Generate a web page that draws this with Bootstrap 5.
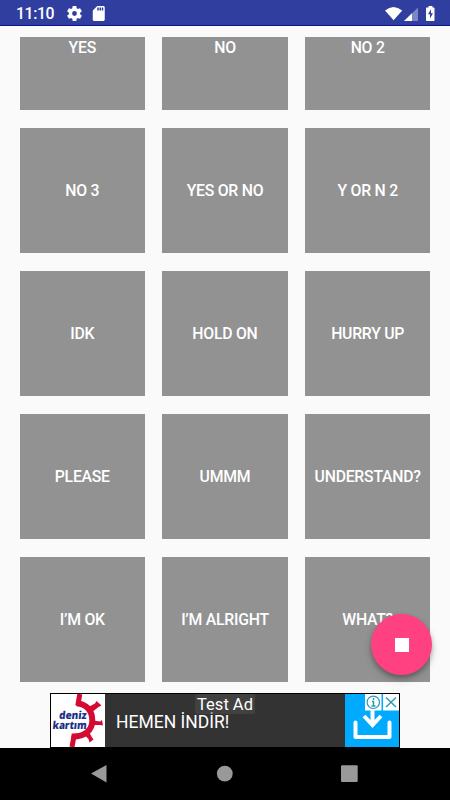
<!DOCTYPE html>
<html lang="en">
<head>
<meta charset="utf-8">
<meta name="viewport" content="width=device-width, initial-scale=1">
<title>Soundboard</title>
<link href="https://cdn.jsdelivr.net/npm/bootstrap@5.3.0/dist/css/bootstrap.min.css" rel="stylesheet">
<style>
body{font-family:Roboto,"Liberation Sans",sans-serif;background:#fafafa;line-height:1}
.screen{width:450px;height:800px}
.status-bar{height:26px;background:#303e9f;border-bottom:1px solid #0a1690;padding:2px 15px 0 16px}
.clock{font-size:15.8px;font-weight:500;letter-spacing:-.4px;width:51px;white-space:nowrap;line-height:23px}
.board{height:645px;margin:11px 19.7px 0}
.tiles{display:grid;grid-template-columns:repeat(3,125.2px);grid-auto-rows:125.4px;gap:17.6px 17.5px}
.tile{background:#929292;color:#fff;font-size:15.8px;font-weight:500;letter-spacing:-.25px;border:0;border-radius:0;padding:2px 0 0;white-space:nowrap;line-height:20px}
.ad{width:350px;height:55px;margin:11px 0 0 50px;background:#333;border:1px solid #000}
.ad-logo{width:54px;background:#fff}
.ad-title{font-size:17.5px;padding:2px 0 0 11px;line-height:20px}
.ad-action{width:54px;background:#00aaff}
.ad-label{left:144px;top:0;width:60px;height:20px;background:rgba(80,80,80,.5);font-size:16.5px;line-height:22px;border-radius:2px}
.fab{left:371px;top:614px;width:61px;height:61px;background:#ff4081;box-shadow:0 3px 5px rgba(0,0,0,.28),0 5px 10px rgba(0,0,0,.12);border:0}
.fab-stop{width:14px;height:14px;background:#fff}
.nav-keys{height:52px;background:#000}
svg{display:block}
</style>
</head>
<body>
<div class="screen position-relative d-flex flex-column overflow-hidden">
  <header class="status-bar d-flex align-items-center text-white flex-shrink-0">
    <span class="clock">11:10</span>
    <svg width="15" height="15" viewBox="2 2 20 20" fill="#fff"><path d="M19.43 12.98c.04-.32.07-.64.07-.98s-.03-.66-.07-.98l2.11-1.65c.19-.15.24-.42.12-.64l-2-3.46c-.12-.22-.39-.3-.61-.22l-2.49 1c-.52-.4-1.08-.73-1.69-.98l-.38-2.65C14.46 2.18 14.25 2 14 2h-4c-.25 0-.46.18-.49.42l-.38 2.65c-.61.25-1.17.59-1.69.98l-2.49-1c-.23-.09-.49 0-.61.22l-2 3.46c-.13.22-.07.49.12.64l2.11 1.65c-.04.32-.07.65-.07.98s.03.66.07.98l-2.11 1.65c-.19.15-.24.42-.12.64l2 3.46c.12.22.39.3.61.22l2.49-1c.52.4 1.08.73 1.69.98l.38 2.65c.03.24.24.42.49.42h4c.25 0 .46-.18.49-.42l.38-2.65c.61-.25 1.17-.59 1.69-.98l2.49 1c.23.09.49 0 .61-.22l2-3.46c.12-.22.07-.49-.12-.64l-2.11-1.65zM12 15.2a3.2 3.2 0 1 1 0-6.4 3.2 3.2 0 0 1 0 6.4z"/></svg>
    <svg class="ms-2" width="16" height="15" viewBox="1 2 20 20" fill="#fff"><path d="M18 2h-8L4 8v12c0 1.100.9 2 2 2h12c1.100 0 2-.9 2-2V4c0-1.100-.9-2-2-2zm-6 6h-2V4h2v4zm3 0h-2V4h2v4zm3 0h-2V4h2v4z"/></svg>
    <span class="ms-auto">
      <svg width="50" height="16" viewBox="0 0 50 16">
        <path d="M0 4.500Q8.500-2.500 17.200 4.500L8.600 14.300z" fill="#fff"/>
        <path d="M19 15L33 1.500V15z" fill="#7c86c4"/>
        <path d="M19 15L27 7.200V15z" fill="#fff"/>
        <path d="M41.500 1.500h2V0h4v1.500H49l.5.500V14.500l-.5.500H41.500L41 14.500V2z" fill="#fff"/>
        <path d="M46 3.200l-3 5.100h2v4.200l3-5.300h-2z" fill="#303e9f"/>
      </svg>
    </span>
  </header>

  <main class="board d-flex flex-column justify-content-end overflow-hidden flex-shrink-0">
    <div class="tiles">
      <button class="tile">YES</button><button class="tile">NO</button><button class="tile">NO 2</button>
      <button class="tile">NO 3</button><button class="tile">YES OR NO</button><button class="tile">Y OR N 2</button>
      <button class="tile">IDK</button><button class="tile">HOLD ON</button><button class="tile">HURRY UP</button>
      <button class="tile">PLEASE</button><button class="tile">UMMM</button><button class="tile">UNDERSTAND?</button>
      <button class="tile">I’M OK</button><button class="tile">I’M ALRIGHT</button><button class="tile">WHAT?</button>
    </div>
  </main>

  <section class="ad position-relative d-flex flex-shrink-0 text-white">
    <div class="ad-logo">
      <svg width="54" height="53" viewBox="0 0 54 53">
        <g fill="none" stroke="#d50a32">
          <path d="M25.500 9.300C35.500 10 41.300 17 41.300 26.500S34 43 20.500 42.500" stroke-width="6"/>
          <path d="M28.800 0L26.800 11.500M21 53L23 42" stroke-width="5"/>
        </g>
        <g fill="#d50a32">
          <path d="M35.500 14L44 9.500 45.500 7 50.500 11.500 47.500 13 40 19z"/>
          <path d="M42 26.500L49 27.500 51 26 52 31.500 49.500 31 42 31z"/>
          <path d="M33.500 41L38 38 40.500 42.500 42.500 45.500 38.500 48.500 37.500 45z"/>
        </g>
        <g fill="#1b3289" font-family="'Open Sans',sans-serif" font-weight="800" font-size="11">
          <text transform="translate(7.800 25.300) skewX(-6)" textLength="27.500" lengthAdjust="spacingAndGlyphs">deniz</text>
          <text transform="translate(1.300 34.500) skewX(-6)" textLength="34" lengthAdjust="spacingAndGlyphs">kartım</text>
        </g>
      </svg>
    </div>
    <div class="ad-title d-flex align-items-center flex-grow-1">HEMEN İNDİR!</div>
    <div class="ad-action">
      <svg width="54" height="53" viewBox="0 0 54 53">
        <g fill="none" stroke="#fff" stroke-width="4">
          <path d="M10.500 28.500V43H44.500V28.500" stroke-linecap="round" stroke-linejoin="round"/>
          <path d="M27.500 16V31M19 22L27.500 31L36 22"/>
        </g>
        <path d="M20 0H36.500V16.500H20zM38 0H54V16.500H38z" fill="#fff"/>
        <g fill="none" stroke="#259bb5">
          <circle cx="28.300" cy="8.300" r="6.200" stroke-width="1.200"/>
          <path d="M28.500 4v2M27 7.500h1.500v4.500M26.500 12h4" stroke-width="1.500"/>
          <path d="M41 3.500l10 9.500M51 3.500l-10 9.500" stroke-width="1.400"/>
        </g>
      </svg>
    </div>
    <div class="ad-label position-absolute text-center">Test Ad</div>
  </section>

  <nav class="nav-keys flex-shrink-0">
    <svg width="450" height="52" viewBox="0 0 450 52" fill="#999">
      <path d="M91 25.500L106.500 17V34.500z"/>
      <circle cx="224.800" cy="25.700" r="7.900"/>
      <rect x="341" y="17.300" width="16.700" height="16.700" rx="1"/>
    </svg>
  </nav>

  <button class="fab position-absolute rounded-circle d-flex align-items-center justify-content-center p-0" aria-label="Stop"><span class="fab-stop"></span></button>
</div>
<script src="https://cdn.jsdelivr.net/npm/bootstrap@5.3.0/dist/js/bootstrap.bundle.min.js"></script>
</body>
</html>
